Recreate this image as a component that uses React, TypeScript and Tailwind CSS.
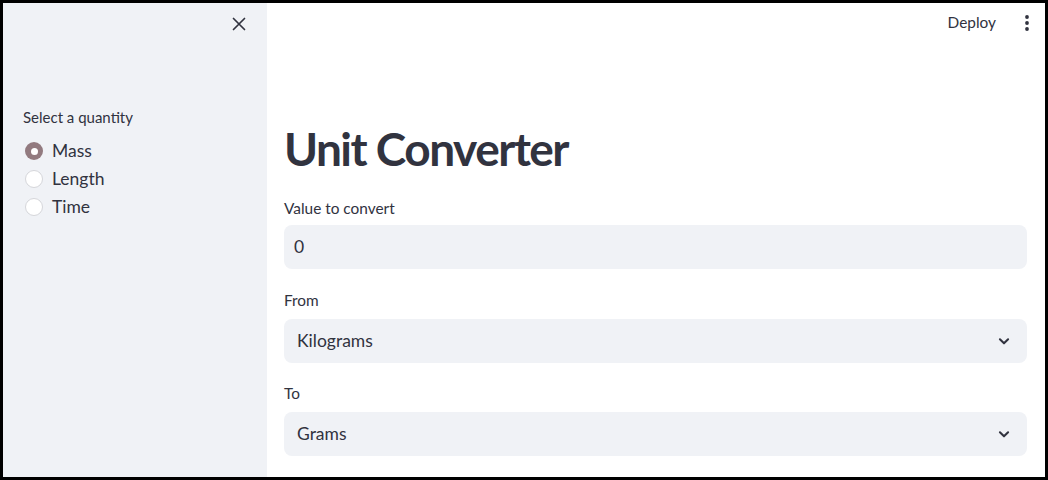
import React from "react";

const FONT = { fontFamily: "Lato, 'Open Sans', sans-serif" };

function Radio({ label, checked }: { label: string; checked?: boolean }) {
  return (
    <div className="flex items-center h-[28px]">
      {checked ? (
        <span className="w-[18px] h-[18px] rounded-full bg-[#927a7f] flex items-center justify-center">
          <span className="w-[7px] h-[7px] rounded-full bg-white" />
        </span>
      ) : (
        <span className="w-[18px] h-[18px] rounded-full bg-white border border-[#d5d6da]" />
      )}
      <span className="ml-[9px] text-[17.5px] text-[#31333f]">{label}</span>
    </div>
  );
}

function Chevron() {
  return (
    <svg width="14" height="14" viewBox="0 0 24 24" fill="none" stroke="#31333f" strokeWidth="3.5" strokeLinecap="round" strokeLinejoin="round">
      <path d="M5 9l7 7 7-7" />
    </svg>
  );
}

function SelectBox({ value }: { value: string }) {
  return (
    <div className="h-[44px] rounded-[8px] bg-[#f0f2f6] flex items-center justify-between pl-[13px] pr-[16px]">
      <span className="text-[17.5px] text-[#31333f]">{value}</span>
      <Chevron />
    </div>
  );
}

export default function App() {
  return (
    <div style={FONT} className="w-[1048px] h-[480px] border-[3px] border-black flex overflow-hidden bg-white text-[#31333f]">
      <aside className="w-[264px] h-full bg-[#f0f2f6] flex flex-col">
        <div className="flex justify-end pr-[21px] pt-[14px]">
          <svg width="14" height="14" viewBox="0 0 14 14" stroke="#31333f" strokeWidth="1.7" strokeLinecap="round">
            <path d="M1.5 1.5l11 11M12.5 1.5l-11 11" />
          </svg>
        </div>
        <div className="pl-[20px] mt-[74px]">
          <div className="text-[15px] leading-[24px]">Select a quantity</div>
          <div className="mt-[8px] pl-[2px]">
            <Radio label="Mass" checked />
            <Radio label="Length" />
            <Radio label="Time" />
          </div>
        </div>
      </aside>
      <main className="flex-1 h-full flex flex-col">
        <div className="h-[40px] flex items-center justify-end pr-[16px]">
          <span className="text-[15.4px] mr-[29px]">Deploy</span>
          <svg width="4" height="16" viewBox="0 0 4 16" fill="#31333f">
            <circle cx="2" cy="2" r="1.9" />
            <circle cx="2" cy="8" r="1.9" />
            <circle cx="2" cy="14" r="1.9" />
          </svg>
        </div>
        <div className="pl-[17px] pr-[18px] flex flex-col">
          <h1 className="mt-[76px] text-[46px] leading-[60px] font-bold text-[#31333f] tracking-[-1.5px]">Unit Converter</h1>
          <div className="mt-[17px] text-[15.4px] leading-[24px]">Value to convert</div>
          <div className="mt-[5px] h-[44px] rounded-[8px] bg-[#f0f2f6] flex items-center pl-[10px]">
            <span className="text-[17.5px]">0</span>
          </div>
          <div className="mt-[19px] text-[15.4px] leading-[24px]">From</div>
          <div className="mt-[7px]">
            <SelectBox value="Kilograms" />
          </div>
          <div className="mt-[18px] text-[15.4px] leading-[24px]">To</div>
          <div className="mt-[7px]">
            <SelectBox value="Grams" />
          </div>
        </div>
      </main>
    </div>
  );
}
